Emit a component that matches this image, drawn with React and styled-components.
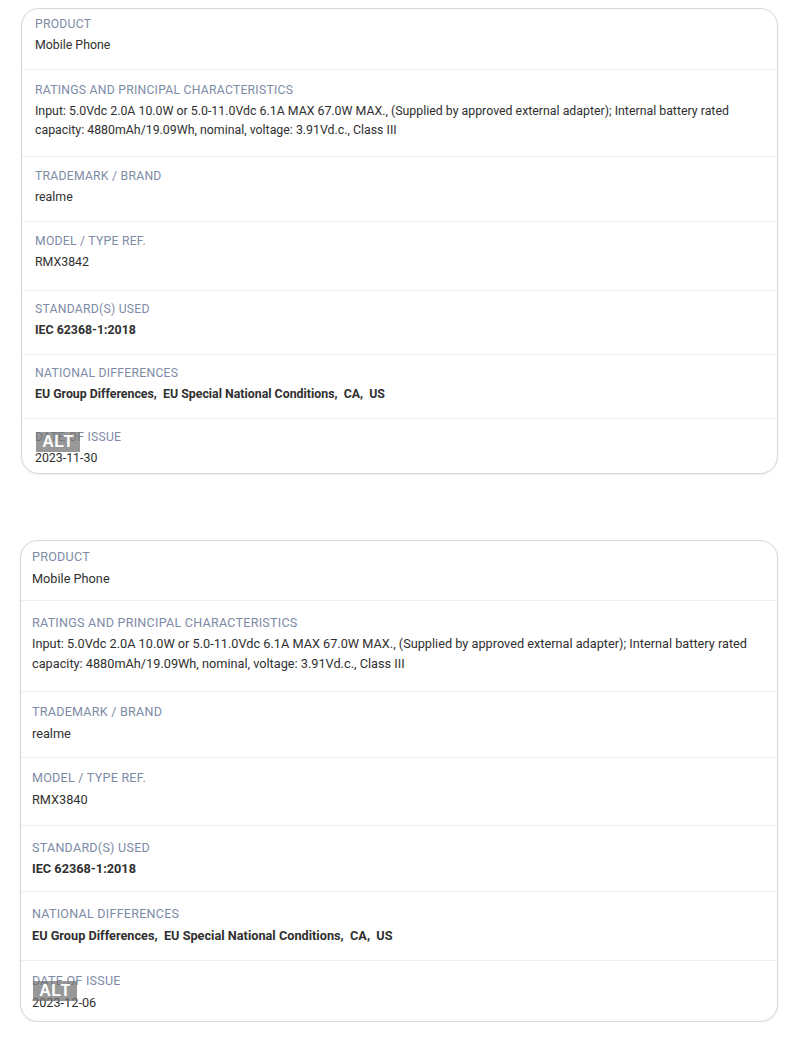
import React from "react";
import styled, { createGlobalStyle } from "styled-components";

const Global = createGlobalStyle`
  html, body { margin: 0; padding: 0; background: #ffffff; }
  body { font-family: Roboto, "Liberation Sans", Arial, sans-serif; -webkit-font-smoothing: antialiased; }
`;

const Page = styled.main`
  display: flex;
  flex-direction: column;
  gap: 66px;
  padding-top: 8px;
  width: 800px;
`;

const Card = styled.section`
  margin-left: ${(p) => p.$left}px;
  width: ${(p) => p.$width}px;
  box-sizing: border-box;
  border: 1.5px solid #d6d6d6;
  border-radius: 18px;
  box-shadow: 0 1px 2px rgba(0, 0, 0, 0.07);
  background: #fff;
  overflow: hidden;
`;

const Row = styled.div`
  position: relative;
  display: flex;
  flex-direction: column;
  padding: ${(p) => p.$pt}px ${(p) => p.$px}px ${(p) => p.$pb}px;
  border-top: ${(p) => (p.$first ? "none" : "1px solid #efefef")};
`;

const Label = styled.div`
  font-size: ${(p) => 12.2 * p.$s}px;
  line-height: ${(p) => 17 * p.$s}px;
  letter-spacing: 0.25px;
  text-transform: uppercase;
  color: #7d8ba6;
`;

const Value = styled.div`
  margin-top: ${(p) => 3 * p.$s}px;
  font-size: ${(p) => 12.35 * p.$s}px;
  line-height: ${(p) => 19.5 * p.$s}px;
  color: #303030;
  white-space: pre-wrap;
  font-weight: ${(p) => (p.$bold ? 700 : 400)};
`;

const AltBadge = styled.span`
  position: absolute;
  left: ${(p) => p.$x}px;
  top: ${(p) => p.$y}px;
  width: 44px;
  height: 20px;
  background: rgba(112, 112, 112, 0.72);
  color: #fff;
  font-family: "Liberation Sans", Arial, sans-serif;
  font-weight: 700;
  font-size: 16px;
  line-height: 20px;
  text-align: center;
  letter-spacing: 0.5px;
`;

const cards = [
  {
    left: 21,
    width: 757,
    s: 1,
    px: 13,
    model: "RMX3842",
    date: "2023-11-30",
    alt: { x: 14, y: 13 },
    pads: [[7, 13], [12, 15], [11, 14], [11, 17], [10, 14], [10, 13], [10, 5]],
  },
  {
    left: 20,
    width: 758,
    s: 1.03,
    px: 11,
    model: "RMX3840",
    date: "2023-12-06",
    alt: { x: 12, y: 20 },
    pads: [[7, 11], [13, 17], [11, 13], [11, 15], [13, 12], [13, 14], [11, 8]],
  },
];

const fields = (c) => [
  { label: "Product", value: "Mobile Phone" },
  {
    label: "Ratings and principal characteristics",
    value:
      "Input: 5.0Vdc 2.0A 10.0W or 5.0-11.0Vdc 6.1A MAX 67.0W MAX., (Supplied by approved external adapter); Internal battery rated capacity: 4880mAh/19.09Wh, nominal, voltage: 3.91Vd.c., Class III",
  },
  { label: "Trademark / Brand", value: "realme" },
  { label: "Model / Type ref.", value: c.model },
  { label: "Standard(s) used", value: "IEC 62368-1:2018", bold: true },
  {
    label: "National differences",
    value: "EU Group Differences,  EU Special National Conditions,  CA,  US",
    bold: true,
  },
  { label: "Date of issue", value: c.date, alt: true },
];

export default function App() {
  return (
    <>
      <Global />
      <Page>
        {cards.map((c, ci) => (
          <Card key={ci} $left={c.left} $width={c.width}>
            {fields(c).map((f, i) => (
              <Row
                key={i}
                $first={i === 0}
                $pt={c.pads[i][0]}
                $pb={c.pads[i][1]}
                $px={c.px}
              >
                <Label $s={c.s}>{f.label}</Label>
                <Value $s={c.s} $bold={f.bold}>
                  {f.value}
                </Value>
                {f.alt && (
                  <AltBadge $x={c.alt.x} $y={c.alt.y}>
                    ALT
                  </AltBadge>
                )}
              </Row>
            ))}
          </Card>
        ))}
      </Page>
    </>
  );
}
